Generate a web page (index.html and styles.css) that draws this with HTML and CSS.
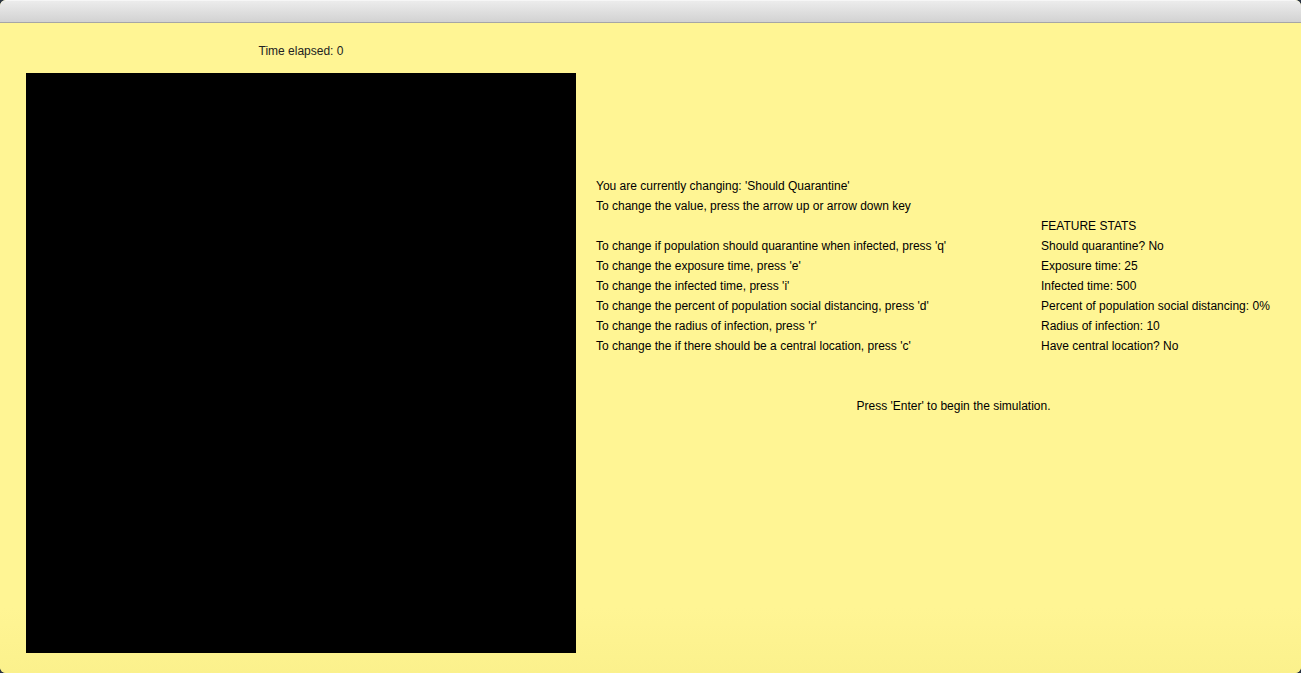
FILE: index.html
```html
<!DOCTYPE html>
<html>
<head>
<meta charset="utf-8">
<link rel="stylesheet" href="styles.css">
</head>
<body>
<div class="window">
  <div class="titlebar"></div>
  <div class="content">
    <div class="left">
      <div class="timer">Time elapsed: 0</div>
      <div class="canvas"></div>
    </div>
    <div class="right">
      <div class="grid">
        <div class="cell">You are currently changing: 'Should Quarantine'</div><div class="cell"></div>
        <div class="cell">To change the value, press the arrow up or arrow down key</div><div class="cell"></div>
        <div class="cell"></div><div class="cell">FEATURE STATS</div>
        <div class="cell">To change if population should quarantine when infected, press 'q'</div><div class="cell">Should quarantine? No</div>
        <div class="cell">To change the exposure time, press 'e'</div><div class="cell">Exposure time: 25</div>
        <div class="cell">To change the infected time, press 'i'</div><div class="cell">Infected time: 500</div>
        <div class="cell">To change the percent of population social distancing, press 'd'</div><div class="cell">Percent of population social distancing: 0%</div>
        <div class="cell">To change the radius of infection, press 'r'</div><div class="cell">Radius of infection: 10</div>
        <div class="cell">To change the if there should be a central location, press 'c'</div><div class="cell">Have central location? No</div>
      </div>
      <div class="enter">Press 'Enter' to begin the simulation.</div>
    </div>
  </div>
</div>
</body>
</html>
```
FILE: styles.css
```css
html, body {
  margin: 0;
  padding: 0;
  height: 100%;
  background: #2b3442;
  overflow: hidden;
}
.window {
  height: 673px;
  width: 1301px;
  border-radius: 6px;
  overflow: hidden;
  display: flex;
  flex-direction: column;
  background: #fff594;
}
.titlebar {
  flex: none;
  background: linear-gradient(#ececec, #d2d2d2);
  border-top: 1px solid #f6f6f6;
  border-bottom: 1px solid #a6a6a6;
  box-sizing: border-box;
  height: 23px;
}
.content {
  flex: 1;
  display: flex;
  align-items: flex-start;
  background: linear-gradient(#fff594 90%, #fbf18c);
  font-family: "Liberation Sans", Arial, sans-serif;
  font-size: 12px;
  color: #000;
}
.left {
  padding-left: 26px;
  padding-top: 18px;
  width: 550px;
  flex: none;
}
.timer {
  line-height: 20px;
  text-align: center;
  color: #222;
}
.canvas {
  margin-top: 12px;
  width: 550px;
  height: 580px;
  background: #000;
}
.right {
  flex: 1;
  padding-top: 153px;
}
.grid {
  display: grid;
  grid-template-columns: 445px auto;
  padding-left: 20px;
}
.cell {
  line-height: 20px;
  height: 20px;
  white-space: nowrap;
}
.enter {
  margin-top: 40px;
  padding-left: 30px;
  text-align: center;
  line-height: 20px;
}
```
